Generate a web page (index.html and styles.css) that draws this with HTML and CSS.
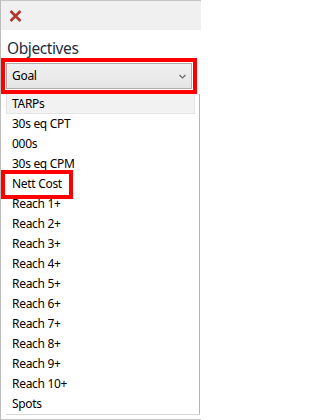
FILE: index.html
```html
<!DOCTYPE html>
<html>
<head>
<meta charset="utf-8">
<link rel="stylesheet" href="styles.css">
</head>
<body>
<div class="frame">
  <div class="titlebar">
    <svg class="close" width="13" height="12" viewBox="0 0 13 12"><path d="M1.5 1 L11.5 11 M11.5 1 L1.5 11" stroke="#b23a2c" stroke-width="2.6" stroke-linecap="butt"/></svg>
  </div>
  <div class="label">Objectives</div>
  <div class="mark-box">
    <div class="combo">
      <span class="combo-text">Goal</span>
      <svg class="chev" width="7" height="5" viewBox="0 0 7 5"><path d="M0.5 1 L3.5 4 L6.5 1" fill="none" stroke="#6b6b6b" stroke-width="1.2"/></svg>
    </div>
  </div>
  <ul class="list">
    <li class="item selected">TARPs</li>
    <li class="item">30s eq CPT</li>
    <li class="item">000s</li>
    <li class="item">30s eq CPM</li>
    <li class="item"><span class="mark-item">Nett Cost</span></li>
    <li class="item">Reach 1+</li>
    <li class="item">Reach 2+</li>
    <li class="item">Reach 3+</li>
    <li class="item">Reach 4+</li>
    <li class="item">Reach 5+</li>
    <li class="item">Reach 6+</li>
    <li class="item">Reach 7+</li>
    <li class="item">Reach 8+</li>
    <li class="item">Reach 9+</li>
    <li class="item">Reach 10+</li>
    <li class="item">Spots</li>
  </ul>
</div>
</body>
</html>
```

FILE: styles.css
```css
html, body {
  margin: 0;
  padding: 0;
  background: #ffffff;
}
body {
  font-family: "Noto Sans", "Open Sans", sans-serif;
  font-size: 12px;
  letter-spacing: -0.3px;
  color: #000;
}
.frame {
  width: 201px;
  height: 420px;
  box-sizing: border-box;
  border-left: 1px solid #bdbdbd;
  border-top: 1px solid #c4c4c4;
  border-bottom: 1px solid #c4c4c4;
  overflow: hidden;
  display: flex;
  flex-direction: column;
}
.titlebar {
  height: 29px;
  flex: none;
  background: #f0f0f0;
  box-sizing: border-box;
  padding: 9px 0 0 8px;
}
.close {
  display: block;
}
.label {
  flex: none;
  margin-top: 9px;
  height: 19px;
  line-height: 19px;
  padding-left: 6px;
  font-size: 15.5px;
  letter-spacing: -0.4px;
  color: #1e2d40;
}
.mark-box {
  flex: none;
  margin: 0 3px 0 0;
  width: 196px;
  box-sizing: border-box;
  border: 4px solid #ff0000;
  padding: 1px;
}
.combo {
  height: 26px;
  box-sizing: border-box;
  border: 1px solid #adadad;
  background: linear-gradient(#f0f0f0, #e5e5e5);
  display: flex;
  align-items: center;
  justify-content: space-between;
  padding: 0 5px 0 5px;
}
.combo-text {
  line-height: 20px;
}
.chev {
  display: block;
  margin-top: 1px;
}
.list {
  list-style: none;
  margin: 0 0 0 5px;
  padding: 0;
  width: 194px;
  height: 321px;
  box-sizing: border-box;
  border-right: 1px solid #b4b4b4;
  border-bottom: 1px solid #d8d8d8;
  flex: none;
}
.item {
  height: 20px;
  line-height: 20px;
  padding-left: 6px;
  margin-right: 4px;
  box-sizing: border-box;
  white-space: nowrap;
}
.selected {
  background: #f2f2f2;
  border: 1px solid #e3e3e3;
  border-top: none;
  padding-left: 5px;
  line-height: 19px;
}
.mark-item {
  display: inline-block;
  margin-left: -7px;
  padding: 0 7px 0 7px;
  height: 21px;
  outline: 4px solid #ff0000;
  vertical-align: top;
}
```
